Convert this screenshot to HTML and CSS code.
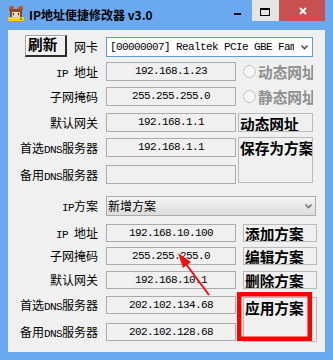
FILE: index.html
```html
<!DOCTYPE html>
<html lang="zh-CN">
<head>
<meta charset="utf-8">
<title>IP地址便捷修改器 v3.0</title>
<link rel="stylesheet" href="styles.css">
</head>
<body>
<div class="window">
  <div class="titlebar">
    <svg class="appicon" viewBox="0 0 16 16" shape-rendering="crispEdges">
      <rect x="1" y="0" width="5" height="5" rx="2" fill="#b85a30"/>
      <rect x="10" y="0" width="5" height="5" rx="2" fill="#b85a30"/>
      <rect x="2" y="3" width="12" height="4" fill="#8a4020"/>
      <rect x="3" y="5" width="10" height="6" fill="#f9d6b4"/>
      <rect x="3" y="4" width="10" height="2" fill="#9a4a24"/>
      <rect x="2" y="5" width="2" height="7" fill="#8a4020"/>
      <rect x="12" y="5" width="2" height="7" fill="#8a4020"/>
      <rect x="5" y="7" width="1" height="2" fill="#402010"/>
      <rect x="10" y="7" width="1" height="2" fill="#402010"/>
      <rect x="5" y="9" width="1" height="1" fill="#f08080"/>
      <rect x="10" y="9" width="1" height="1" fill="#f08080"/>
      <rect x="0" y="11" width="16" height="5" fill="#f2c81e"/>
      <rect x="1" y="12" width="14" height="1" fill="#fbe36a"/>
      <rect x="0" y="15" width="16" height="1" fill="#c89a10"/>
      <rect x="12" y="12" width="2" height="2" fill="#3cb043"/>
    </svg>
    <span class="title">IP地址便捷修改器 v3.0</span>
    <div class="controls">
      <div class="ctl min"><i class="min-glyph"></i></div>
      <div class="ctl max"><i class="max-glyph"></i></div>
      <div class="ctl close">
        <svg width="46" height="21" viewBox="0 0 46 21">
          <line x1="21" y1="8" x2="27" y2="14" stroke="#fff" stroke-width="1.8"/>
          <line x1="27" y1="8" x2="21" y2="14" stroke="#fff" stroke-width="1.8"/>
        </svg>
      </div>
    </div>
  </div>

  <div class="client">
    <div class="toprow">
      <div class="btn refresh">刷新</div>
      <span class="lbl nic-lbl">网卡</span>
      <div class="combo nic">
        <span class="combo-text">[00000007] Realtek PCIe GBE Family Controller</span>
        <span class="chev-box"><svg class="chev" width="7" height="5" viewBox="0 0 7 5"><polyline points="0.5,0.5 3.5,3.8 6.5,0.5" fill="none" stroke="#404040" stroke-width="1.4"/></svg></span>
      </div>
    </div>

    <div class="form upper">
      <span class="lbl"><span class="lat">IP </span>地址</span>
      <div class="field">192.168.1.23</div>
      <div class="radio"><span class="dot"></span><span class="rtext">动态网址</span></div>

      <span class="lbl">子网掩码</span>
      <div class="field">255.255.255.0</div>
      <div class="radio"><span class="dot"></span><span class="rtext">静态网址</span></div>

      <span class="lbl">默认网关</span>
      <div class="field">192.168.1.1</div>
      <div class="btn">动态网址</div>

      <span class="lbl">首选<span class="lat">DNS</span>服务器</span>
      <div class="field">192.168.1.1</div>
      <div class="btn tall save">保存为方案</div>

      <span class="lbl">备用<span class="lat">DNS</span>服务器</span>
      <div class="field"></div>
    </div>

    <div class="schemerow">
      <span class="lbl"><span class="lat">IP</span>方案</span>
      <div class="combo scheme">
        <span class="combo-text">新增方案</span>
        <span class="chev-box"><svg class="chev" width="7" height="5" viewBox="0 0 7 5"><polyline points="0.5,0.5 3.5,3.8 6.5,0.5" fill="none" stroke="#6a6a6a" stroke-width="1.4"/></svg></span>
      </div>
    </div>

    <div class="form lower">
      <span class="lbl"><span class="lat">IP </span>地址</span>
      <div class="field">192.168.10.100</div>
      <div class="btn">添加方案</div>

      <span class="lbl">子网掩码</span>
      <div class="field">255.255.255.0</div>
      <div class="btn">编辑方案</div>

      <span class="lbl">默认网关</span>
      <div class="field">192.168.10.1</div>
      <div class="btn">删除方案</div>

      <span class="lbl">首选<span class="lat">DNS</span>服务器</span>
      <div class="field">202.102.134.68</div>
      <div class="btn tall apply">应用方案</div>

      <span class="lbl">备用<span class="lat">DNS</span>服务器</span>
      <div class="field">202.102.128.68</div>
    </div>
  </div>

  <svg class="annot" width="333" height="360" viewBox="0 0 333 360">
    <rect x="239.25" y="294.25" width="70.5" height="44.5" fill="none" stroke="#ff0000" stroke-width="4.5"/>
    <line x1="186" y1="264" x2="209" y2="295" stroke="#f01010" stroke-width="2"/>
    <polygon points="178,253 191,262 183,268" fill="#f01010"/>
  </svg>
</div>
</body>
</html>
```

FILE: styles.css
```css
* { box-sizing: border-box; margin: 0; padding: 0; }
html, body { width: 333px; height: 360px; overflow: hidden; }
body {
  font-family: "Noto Sans CJK SC", "Noto Sans", sans-serif;
  color: #000;
  background: #6aa9ef;
}
.window {
  position: relative;
  width: 333px;
  height: 360px;
  background: #6aa9ef;
  padding: 0 8px 8px;
  display: flex;
  flex-direction: column;
}

/* title bar */
.titlebar { height: 30px; flex: none; display: flex; align-items: flex-start; }
.appicon { width: 16px; height: 16px; margin-top: 6px; flex: none; }
.title { margin-left: 5px; font-size: 12px; font-weight: 700; line-height: 30px; white-space: nowrap; }
.controls { margin-left: auto; display: flex; }
.ctl { height: 21px; }
.min { width: 26px; }
.max { width: 27px; background: #e5e5e5; }
.close { width: 46px; background: #c75050; }
.close svg { display: block; }
.min-glyph { display: block; width: 7px; height: 2px; background: #000; margin: 13px 0 0 8px; }
.max-glyph { display: block; width: 10px; height: 8px; border: 1px solid #000; border-top-width: 2px; margin: 8px 0 0 8px; }

/* client area */
.client { flex: 1; background: #f0f0f0; font-size: 12px; }

.toprow { display: flex; align-items: flex-start; height: 27px; padding: 5px 0 0 17px; }

.btn {
  font-weight: 700;
  font-size: 11pt;
  line-height: 15px;
  white-space: nowrap;
  overflow: hidden;
  background: #f0f0f0;
  border: 1px solid #bababa;
  padding: 2px 0 0 1px;
  color: #000;
}
.refresh {
  width: 42px;
  height: 22px;
  border-width: 1px 2px 2px 1px;
  border-color: #a0a0a0 #2e2e2e #2e2e2e #a0a0a0;
  box-shadow: inset 1px 1px 0 #fff;
  padding: 0 0 0 2px;
}
.lbl { white-space: nowrap; }
.nic-lbl { width: 31px; text-align: right; margin-top: 2px; line-height: 20px; }

.combo { display: flex; height: 20px; border: 1px solid #acacac; }
.nic { width: 207px; margin: 2px 0 0 8px; border-color: #569de5; background: #fff; }
.combo-text { flex: 1; overflow: hidden; white-space: nowrap; line-height: 18px; }
.nic .combo-text {
  padding-left: 3px;
  font-family: "Liberation Mono", monospace;
  font-size: 11px;
  letter-spacing: -0.6px;
}
.chev-box { width: 18px; flex: none; display: flex; align-items: center; padding-left: 7px; }
.chev { display: block; }

.lat { font-family: "Liberation Mono", monospace; font-size: 11px; letter-spacing: -0.6px; }

.form { display: grid; align-items: start; }
.form .lbl { padding-right: 8px; text-align: right; height: 19px; line-height: 19px; }
.field {
  width: 130px;
  height: 19px;
  border: 1px solid #ababab;
  background: #f0f0f0;
  font-family: "Liberation Mono", monospace;
  font-size: 11px;
  letter-spacing: -0.6px;
  text-align: center;
  line-height: 17px;
  white-space: nowrap;
  overflow: hidden;
}

.upper {
  margin-top: 5px;
  grid-template-columns: 98px 132px 75px;
  grid-template-rows: 25px 26px 25px 27px 19px;
}
.radio { display: flex; align-items: center; height: 19px; width: 75px; overflow: hidden; padding-left: 5px; }
.dot { width: 13px; height: 13px; border-radius: 50%; border: 1px solid #c3c3c3; background: #f5f5f5; flex: none; }
.rtext { margin-left: 2px; font-weight: 700; font-size: 11pt; color: #8f8f8f; white-space: nowrap; line-height: 15px; }
.upper .btn { width: 75px; height: 19px; }
.btn.tall { grid-row: span 2; }
.upper .save { height: 46px; margin-top: -1px; }

.schemerow { display: flex; margin-top: 12px; height: 20px; }
.schemerow .lbl { width: 98px; padding-right: 8px; text-align: right; line-height: 20px; }
.scheme { width: 210px; background: linear-gradient(#f4f4f4, #e9e9e9 45%, #dcdcdc); }
.scheme .combo-text { padding-left: 1px; }
.scheme .chev-box { padding-left: 8px; }

.lower {
  margin-top: 8px;
  grid-template-columns: 98px 137px 74px;
  grid-template-rows: 23px 24px 25px 27px 18px;
}
.lower .lbl { height: 18px; line-height: 18px; }
.lower .field { height: 18px; line-height: 16px; }
.lower .btn { width: 74px; height: 18px; padding-top: 1px; }
.lower .apply { height: 45px; margin-top: 1px; padding-top: 2px; }

.annot { position: absolute; left: 0; top: 0; pointer-events: none; }
```
